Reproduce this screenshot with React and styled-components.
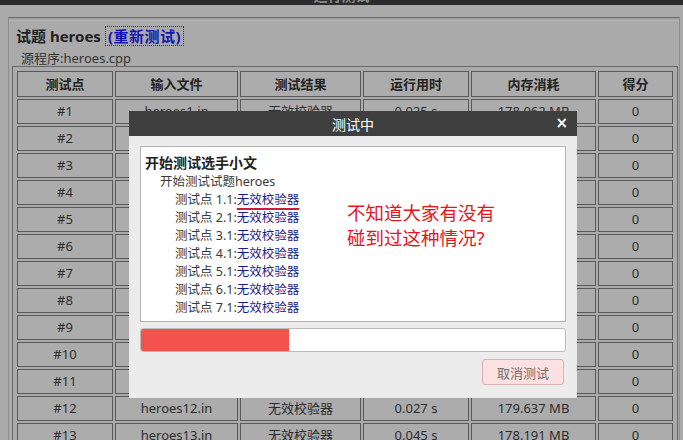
import React from "react";
import styled, { createGlobalStyle } from "styled-components";

const Global = createGlobalStyle`
  html, body { margin: 0; padding: 0; }
  body {
    background: #aaaaaa;
    font-family: "Noto Sans", "Noto Sans CJK SC", sans-serif;
    color: #2b2b2b;
  }
`;

const Page = styled.div`
  position: relative;
  width: 683px;
  height: 440px;
  overflow: hidden;
  background: #aaaaaa;
`;

const TopBar = styled.div`
  height: 5px;
  background: #2c2c2c;
  overflow: hidden;
  text-align: center;
`;

const TopTitle = styled.div`
  margin-top: -12px;
  font-size: 14px;
  line-height: 16px;
  font-weight: bold;
  color: #8a8a8a;
`;

const Panel = styled.div`
  margin: 12px 3px 0 8px;
  border-top: 1px solid #6c6c6c;
  border-left: 1px solid #8e8e8e;
  border-right: 1px solid #8e8e8e;
  box-shadow: inset 0 2px 0 #a2a2a2, inset 0 3px 0 #b8b8b8;
  padding: 9px 0 0 0;
  height: 500px;
`;

const Heading = styled.div`
  margin-left: 7px;
  font-size: 15px;
  line-height: 18px;
  font-weight: bold;
  color: #1f1f1f;
  display: flex;
  align-items: center;
  gap: 5px;
`;

const Retest = styled.span`
  color: #1414b4;
  outline: 1px dotted #333;
  padding: 0 2px;
  letter-spacing: 0.5px;
`;

const Source = styled.div`
  margin: 5px 0 0 12px;
  font-size: 13px;
  line-height: 16px;
  color: #333;
`;

const Table = styled.table`
  margin: 0 3px;
  width: 666px;
  table-layout: fixed;
  border: 1px solid #6a6a6a;
  border-collapse: separate;
  border-spacing: 2px;
  padding: 2px;
  font-size: 13px;
`;

const Th = styled.th`
  border: 1px solid #5a5a5a;
  padding: 0;
  line-height: 24px;
  font-weight: bold;
  color: #222;
  text-align: center;
  background: #acacac;
`;

const Td = styled.td`
  border: 1px solid #5a5a5a;
  padding: 0;
  line-height: 23px;
  color: #2c2c2c;
  text-align: center;
  background: #acacac;
  white-space: nowrap;
  overflow: hidden;
`;

const Modal = styled.div`
  position: absolute;
  left: 129px;
  top: 111px;
  width: 448px;
  height: 287px;
  background: #ececec;
  display: flex;
  flex-direction: column;
`;

const ModalBar = styled.div`
  height: 25px;
  background: #3f3f3f;
  color: #fff;
  display: flex;
  align-items: center;
  justify-content: center;
  position: relative;
  font-size: 14px;
`;

const Close = styled.span`
  position: absolute;
  right: 9px;
  top: 3px;
  font-size: 15px;
  line-height: 18px;
  font-weight: bold;
  font-family: "DejaVu Sans", sans-serif;
`;

const ModalBody = styled.div`
  padding: 10px 11px 0 11px;
  display: flex;
  flex-direction: column;
`;

const LogBox = styled.div`
  position: relative;
  height: 176px;
  box-sizing: border-box;
  background: #fff;
  border: 1px solid #b4b4b4;
  padding: 6px 4px;
  font-size: 12.5px;
  line-height: 18px;
  color: #3a3a3a;
`;

const LogTitle = styled.div`
  font-size: 14px;
  font-weight: bold;
  color: #222;
  line-height: 19px;
`;

const LogLine = styled.div`
  padding-left: ${(p) => p.$indent * 15}px;
  line-height: ${(p) => (p.$indent === 1 ? 19 : 18)}px;
`;

const Bad = styled.span`
  color: #1c1c88;
  text-decoration: ${(p) => (p.$marked ? "underline" : "none")};
  text-decoration-color: #c81e3c;
  text-decoration-thickness: 2px;
  text-underline-offset: 4px;
`;

const Note = styled.div`
  position: absolute;
  left: 206px;
  top: 53px;
  font-size: 18.5px;
  line-height: 25px;
  color: #e5141c;
`;

const Progress = styled.div`
  margin-top: 6px;
  height: 24px;
  box-sizing: border-box;
  background: #fff;
  border: 1px solid #bcbcbc;
  border-radius: 3px;
  overflow: hidden;
`;

const Fill = styled.div`
  height: 100%;
  background: #f2534e;
`;

const Actions = styled.div`
  margin-top: 7px;
  display: flex;
  justify-content: flex-end;
  padding-right: 2px;
`;

const CancelButton = styled.button`
  width: 82px;
  height: 26px;
  background: #fde0e0;
  border: 1px solid #dcb2b2;
  border-radius: 3px;
  color: #707070;
  font-family: "Noto Sans CJK SC", sans-serif;
  font-size: 13px;
  padding: 0;
`;

const widths = [96, 123, 121, 106, 125, 75];
const headers = ["测试点", "输入文件", "测试结果", "运行用时", "内存消耗", "得分"];
const times = ["0.035", "0.031", "0.029", "0.033", "0.030", "0.028", "0.036", "0.032", "0.034", "0.030", "0.029", "0.027", "0.045"];
const mems = ["178.062", "178.543", "179.012", "178.320", "178.775", "179.101", "178.224", "178.904", "179.330", "178.412", "178.658", "179.637", "178.191"];
const rows = times.map((t, i) => ({
  id: `#${i + 1}`,
  file: `heroes${i + 1}.in`,
  result: "无效校验器",
  time: `${t} s`,
  mem: `${mems[i]} MB`,
  score: "0",
}));

export default function App() {
  const progress = 35;
  return (
    <Page>
      <Global />
      <TopBar>
        <TopTitle>运行测试</TopTitle>
      </TopBar>
      <Panel>
        <Heading>
          试题 heroes <Retest>(重新测试)</Retest>
        </Heading>
        <Source>源程序:heroes.cpp</Source>
        <Table>
          <colgroup>
            {widths.map((w, i) => (
              <col key={i} style={{ width: w }} />
            ))}
          </colgroup>
          <thead>
            <tr>
              {headers.map((h) => (
                <Th key={h}>{h}</Th>
              ))}
            </tr>
          </thead>
          <tbody>
            {rows.map((r) => (
              <tr key={r.id}>
                <Td>{r.id}</Td>
                <Td>{r.file}</Td>
                <Td>{r.result}</Td>
                <Td>{r.time}</Td>
                <Td>{r.mem}</Td>
                <Td>{r.score}</Td>
              </tr>
            ))}
          </tbody>
        </Table>
      </Panel>
      <Modal>
        <ModalBar>
          测试中
          <Close>×</Close>
        </ModalBar>
        <ModalBody>
          <LogBox>
            <LogTitle>开始测试选手小文</LogTitle>
            <LogLine $indent={1}>开始测试试题heroes</LogLine>
            {[1, 2, 3, 4, 5, 6, 7].map((n) => (
              <LogLine key={n} $indent={2}>
                测试点 {n}.1:<Bad $marked={n === 1}>无效校验器</Bad>
              </LogLine>
            ))}
            <Note>
              不知道大家有没有
              <br />
              碰到过这种情况?
            </Note>
          </LogBox>
          <Progress>
            <Fill style={{ width: `${progress}%` }} />
          </Progress>
          <Actions>
            <CancelButton>取消测试</CancelButton>
          </Actions>
        </ModalBody>
      </Modal>
    </Page>
  );
}
